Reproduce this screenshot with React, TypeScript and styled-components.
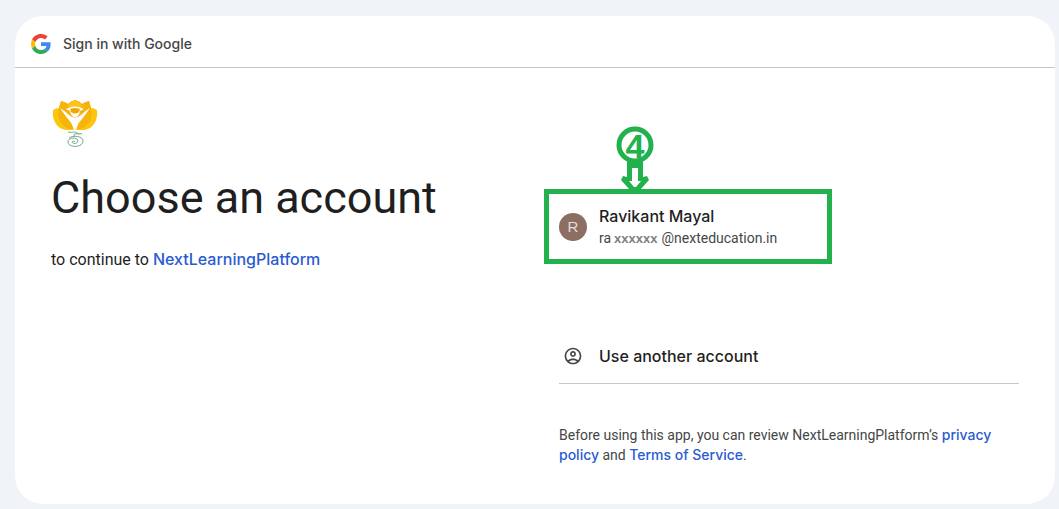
import React from "react";
import styled, { createGlobalStyle } from "styled-components";

const GlobalStyle = createGlobalStyle`
  *, *::before, *::after { box-sizing: border-box; }
  body {
    margin: 0;
    background: #f0f4f9;
    color: #1f1f1f;
    font-family: Roboto, "Liberation Sans", sans-serif;
  }
`;

const Page = styled.div`
  padding: 16px 4px 5px 15px;
`;

const Card = styled.div`
  background: #fff;
  border-radius: 28px;
  overflow: hidden;
`;

const Header = styled.header`
  display: flex;
  align-items: center;
  gap: 12px;
  height: 52px;
  padding: 4px 16px 0;
  border-bottom: 1px solid #c4c7c5;
  font-family: Inter, sans-serif;
  font-size: 14px;
  font-weight: 500;
  line-height: 20px;
  color: #444746;
`;

const Columns = styled.main`
  display: grid;
  grid-template-columns: 1fr 1fr;
  gap: 48px;
  padding: 28px 36px 39px;
`;

const Intro = styled.section``;

const Title = styled.h1`
  margin: 24px 0 0;
  font-size: 45px;
  font-weight: 400;
  line-height: 52px;
`;

const Subtitle = styled.p`
  margin: 24px 0 0;
  font-size: 16px;
  line-height: 24px;
`;

const Link = styled.a`
  color: #2b5bd0;
  font-family: Inter, sans-serif;
  font-weight: 500;
  line-height: 16px;
  text-decoration: none;
`;

const Chooser = styled.section`
  padding-top: 108px;
`;

const AccountArea = styled.div`
  position: relative;
`;

const AccountButton = styled.button`
  display: flex;
  align-items: center;
  gap: 12px;
  width: 100%;
  padding: 0;
  border: 0;
  background: none;
  color: #1f1f1f;
  font: inherit;
  text-align: left;
  cursor: pointer;
`;

const OtherButton = styled(AccountButton)`
  margin-top: 80px;
  height: 55px;
  border-bottom: 1px solid #c4c7c5;
`;

const IconSlot = styled.span`
  display: flex;
  justify-content: center;
  width: 28px;
`;

const Avatar = styled.span`
  display: grid;
  place-items: center;
  width: 28px;
  height: 28px;
  border-radius: 50%;
  background: #8d6e63;
  color: #e6dedb;
  font-family: "Liberation Sans", sans-serif;
  font-size: 15px;
`;

const Details = styled.span`
  display: flex;
  flex-direction: column;
`;

const Name = styled.span`
  font-family: Inter, sans-serif;
  font-size: 16px;
  font-weight: 500;
  line-height: 24px;
`;

const Email = styled.span`
  font-size: 14px;
  line-height: 20px;
  color: #444746;
`;

const Masked = styled.span`
  margin: 0 4px 0 3px;
  font-family: "Liberation Sans", sans-serif;
  font-size: 13px;
  font-weight: 700;
  color: #7f7f7f;
`;

const Terms = styled.p`
  margin: 41px 0 0;
  font-size: 14px;
  line-height: 20px;
  color: #444746;
`;

const Highlight = styled.div`
  position: absolute;
  top: -15px;
  left: -15px;
  width: 288px;
  height: 75px;
  border: 5px solid #22b14c;
  pointer-events: none;
`;

const Marker = styled.svg`
  position: absolute;
  left: 67px;
  bottom: 67px;
`;

const GoogleLogo = () => (
  <svg width="20" height="20" viewBox="0 0 48 48" aria-hidden="true">
    <path fill="#EA4335" d="M24 9.5c3.54 0 6.71 1.22 9.21 3.6l6.85-6.85C35.9 2.38 30.47 0 24 0 14.62 0 6.51 5.38 2.56 13.22l7.98 6.19C12.43 13.72 17.74 9.5 24 9.5z" />
    <path fill="#4285F4" d="M46.98 24.55c0-1.57-.15-3.09-.38-4.55H24v9.02h12.94c-.58 2.96-2.26 5.48-4.78 7.18l7.73 6c4.51-4.18 7.09-10.36 7.09-17.65z" />
    <path fill="#FBBC05" d="M10.53 28.59c-.48-1.45-.76-2.99-.76-4.59s.27-3.14.76-4.59l-7.98-6.19C.92 16.46 0 20.12 0 24c0 3.88.92 7.54 2.56 10.78l7.97-6.19z" />
    <path fill="#34A853" d="M24 48c6.48 0 11.93-2.13 15.89-5.81l-7.73-6c-2.15 1.45-4.92 2.3-8.16 2.3-6.26 0-11.57-4.22-13.47-9.91l-7.98 6.19C6.51 42.62 14.62 48 24 48z" />
  </svg>
);

const LotusLogo = () => (
  <svg width="48" height="52" viewBox="0 0 48 52" display="block" role="img" aria-label="NextLearningPlatform">
    <path fill="#fdc50c" d="M2 14q3-2 6-2l2-7q4 1 7 3 3-3 7-4 4 1 7 4 3-2 7-3l2 7q3 0 6 2 1 8-3 14-4 6-12 6H17q-8 0-12-6-4-6-3-14z" />
    <path fill="#f5b30c" d="M10 5q4 1 7 3 3-3 7-4 4 1 7 4 3-2 7-3 4 11 2 18-3 7-10 10H18q-7-3-10-10-2-7 2-18z" />
    <path fill="#fcc41c" d="M24 4q5 3 8 7H16q3-5 8-7z" />
    <path fill="#fff" d="M9 12q5 3 9 7 6 5 12 0 4-4 9-7-4 6-8 11-4 4-5 8 0 3-2 3t-2-3q-1-4-5-8-4-5-8-11z" />
    <path fill="#fff" d="M15 13q9-5 18 0l-4 2q-1 6-5 6t-5-6z" />
    <path fill="#f1a706" d="M19 13q5-2 10 0l-1 3q-4 3-8 0z" />
    <path fill="none" stroke="#70a783" strokeWidth="1" d="M17 36c5 1 7-1 9 1s4 0 5 1M24 40c-3-1 0-3 4-2M18 42c4-3 14-2 14 3 0 7-15 7-15 1 0-5 10-5 10-1 0 3-6 3-6 1 0-1 3-1 3 0" />
  </svg>
);

const PersonIcon = () => (
  <svg width="20" height="20" viewBox="0 0 24 24" fill="#444746" aria-hidden="true">
    <path d="M12 2C6.48 2 2 6.48 2 12s4.48 10 10 10 10-4.48 10-10S17.52 2 12 2zM7.35 18.5C8.66 17.56 10.26 17 12 17s3.34.56 4.65 1.5C15.34 19.44 13.74 20 12 20s-3.34-.56-4.65-1.5zm10.79-1.38C16.45 15.8 14.32 15 12 15s-4.45.8-6.14 2.12C4.7 15.73 4 13.95 4 12c0-4.42 3.58-8 8-8s8 3.58 8 8c0 1.95-.7 3.73-1.86 5.12z" />
    <path d="M12 6c-1.93 0-3.5 1.57-3.5 3.5S10.07 13 12 13s3.5-1.57 3.5-3.5S13.93 6 12 6zm0 5c-.83 0-1.5-.67-1.5-1.5S11.17 8 12 8s1.5.67 1.5 1.5S12.83 11 12 11z" />
  </svg>
);

const StepMarker = () => (
  <Marker width="38" height="66" viewBox="0 0 38 66" aria-label="Step 4">
    <path fill="#22b14c" d="M11 34h16v17l4-1 2 4-9 10H14L5 54l2-4 4 1z" />
    <path fill="#fff" d="M16 42h6v13h3l-5 6h-2l-5-6h3z" />
    <circle cx="19" cy="19" r="16" fill="#fff" stroke="#22b14c" strokeWidth="5" />
    <text x="19" y="32" textAnchor="middle" fontFamily="Liberation Sans, sans-serif" fontSize="34" fontWeight="700" fill="#22b14c">4</text>
  </Marker>
);

export default function App() {
  return (
    <>
      <GlobalStyle />
      <Page>
        <Card>
          <Header>
            <GoogleLogo />
            <span>Sign in with Google</span>
          </Header>
          <Columns>
            <Intro>
              <LotusLogo />
              <Title>Choose an account</Title>
              <Subtitle>
                to continue to <Link href="#app">NextLearningPlatform</Link>
              </Subtitle>
            </Intro>
            <Chooser>
              <AccountArea>
                <AccountButton type="button">
                  <Avatar>R</Avatar>
                  <Details>
                    <Name>Ravikant Mayal</Name>
                    <Email>
                      ra<Masked>xxxxxx</Masked>@nexteducation.in
                    </Email>
                  </Details>
                </AccountButton>
                <Highlight>
                  <StepMarker />
                </Highlight>
              </AccountArea>
              <OtherButton type="button">
                <IconSlot>
                  <PersonIcon />
                </IconSlot>
                <Name>Use another account</Name>
              </OtherButton>
              <Terms>
                Before using this app, you can review NextLearningPlatform’s{" "}
                <Link href="#privacy">privacy policy</Link> and{" "}
                <Link href="#terms">Terms of Service</Link>.
              </Terms>
            </Chooser>
          </Columns>
        </Card>
      </Page>
    </>
  );
}
